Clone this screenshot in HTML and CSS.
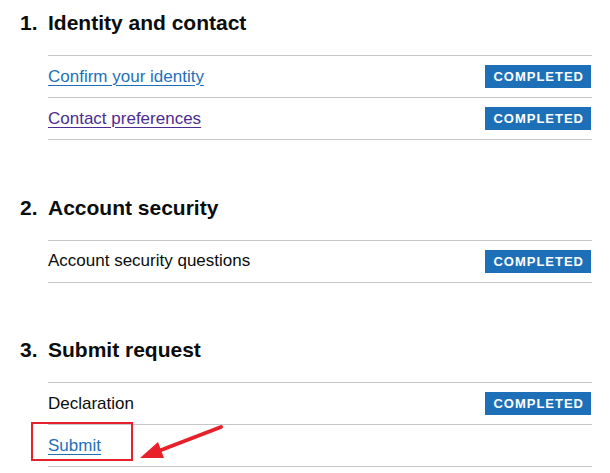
FILE: index.html
```html
<!DOCTYPE html>
<html lang="en">
<head>
<meta charset="utf-8">
<title>Task list</title>
<link rel="stylesheet" href="styles.css">
</head>
<body>
<main class="page">
  <section class="section">
    <h2 class="section-title"><span class="num">1.</span>Identity and contact</h2>
    <ul class="tasks">
      <li class="task"><a class="link" href="#">Confirm your identity</a><strong class="tag">COMPLETED</strong></li>
      <li class="task"><a class="link visited" href="#">Contact preferences</a><strong class="tag">COMPLETED</strong></li>
    </ul>
  </section>
  <section class="section">
    <h2 class="section-title"><span class="num">2.</span>Account security</h2>
    <ul class="tasks">
      <li class="task"><span class="name">Account security questions</span><strong class="tag">COMPLETED</strong></li>
    </ul>
  </section>
  <section class="section last">
    <h2 class="section-title"><span class="num">3.</span>Submit request</h2>
    <ul class="tasks">
      <li class="task"><span class="name">Declaration</span><strong class="tag">COMPLETED</strong></li>
      <li class="task submit-row"><a class="link" href="#">Submit</a>
        <span class="highlight"></span>
        <svg class="arrow" width="90" height="40" viewBox="0 0 90 40" aria-hidden="true">
          <line x1="83" y1="3" x2="18" y2="28" stroke="#e8202a" stroke-width="4" stroke-linecap="round"/>
          <polygon points="2,34 20,18 26,34" fill="#e8202a"/>
        </svg>
      </li>
    </ul>
  </section>
</main>
</body>
</html>
```

FILE: styles.css
```css
* { box-sizing: border-box; }
html, body { margin: 0; padding: 0; background: #ffffff; }
body {
  font-family: "Liberation Sans", Arial, sans-serif;
  color: #0b0c0c;
}
.page { padding: 9px 18px 0 20px; }
.section { margin-bottom: 53.5px; }
.section.last { margin-bottom: 0; }
.section-title {
  margin: 0;
  font-size: 21px;
  line-height: 28px;
  font-weight: 700;
  display: flex;
}
.num { width: 28px; flex: none; }
.tasks {
  list-style: none;
  margin: 18px 0 0 28px;
  padding: 0;
  border-top: 1px solid #c4c6c8;
}
.task {
  position: relative;
  display: flex;
  align-items: center;
  justify-content: space-between;
  height: 42px;
  border-bottom: 1px solid #c4c6c8;
  font-size: 17px;
}
.link {
  color: #1d70b8;
  text-decoration: underline;
  text-decoration-thickness: 1px;
  text-underline-offset: 3px;
}
.link.visited { color: #4c2c92; }
.tag {
  background: #1d70b8;
  color: #ffffff;
  font-size: 13px;
  font-weight: 700;
  letter-spacing: 1px;
  line-height: 23px;
  height: 23px;
  padding: 0 7px 0 8px;
  margin-right: 1px;
}
.highlight {
  position: absolute;
  left: -17px;
  top: -3px;
  width: 102px;
  height: 39px;
  border: 2px solid #e8202a;
}
.arrow {
  position: absolute;
  left: 90px;
  top: -1px;
}
```
